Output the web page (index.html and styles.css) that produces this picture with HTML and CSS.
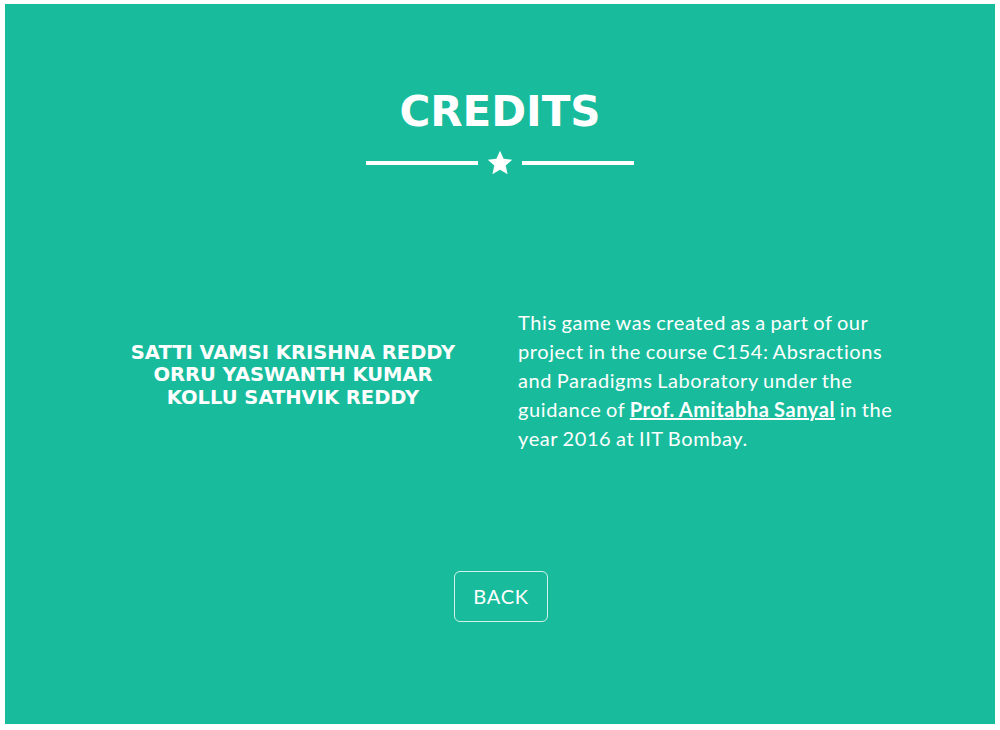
FILE: index.html
```html
<!DOCTYPE html>
<html>
<head>
<meta charset="utf-8">
<title>Credits</title>
<link rel="stylesheet" href="styles.css">
</head>
<body>
<div class="page">
  <section class="credits">
    <h2 class="title">CREDITS</h2>
    <div class="divider">
      <span class="line"></span>
      <svg class="star" viewBox="0 0 24 24" width="28" height="28"><path d="M12 1.5l3.1 6.9 7.4.8-5.6 5 1.6 7.4L12 17.8l-6.5 3.8 1.6-7.4-5.6-5 7.4-.8z" fill="#fff"/></svg>
      <span class="line"></span>
    </div>
    <div class="row">
      <div class="names">
        <div>SATTI VAMSI KRISHNA REDDY</div>
        <div>ORRU YASWANTH KUMAR</div>
        <div>KOLLU SATHVIK REDDY</div>
      </div>
      <p class="about">This game was created as a part of our project in the course C154: Absractions and Paradigms Laboratory under the guidance of <a href="#" class="prof">Prof. Amitabha Sanyal</a> in the year 2016 at IIT Bombay.</p>
    </div>
    <div class="actions">
      <a href="#" class="btn-back">BACK</a>
    </div>
  </section>
</div>
</body>
</html>
```

FILE: styles.css
```css
html, body {
  margin: 0;
  padding: 0;
  background: #ffffff;
}
.page {
  padding: 4px 5px 6px 5px;
}
.credits {
  height: 720px;
  box-sizing: border-box;
  background: #18bc9c;
  color: #ffffff;
  padding-top: 84px;
  text-align: center;
  font-family: Lato, "Open Sans", sans-serif;
}
.title {
  margin: 0;
  font-family: "DejaVu Sans", sans-serif;
  font-weight: bold;
  font-size: 42px;
  line-height: 48px;
  letter-spacing: 0;
}
.divider {
  display: flex;
  justify-content: center;
  align-items: center;
  gap: 8px;
  margin-top: 13px;
  height: 28px;
}
.line {
  display: block;
  width: 112px;
  height: 4px;
  background: #ffffff;
}
.star {
  display: block;
}
.row {
  display: grid;
  grid-template-columns: 386px 382px;
  column-gap: 32px;
  justify-content: center;
  align-items: center;
  margin-top: 131px;
}
.names {
  font-family: "DejaVu Sans", sans-serif;
  font-weight: bold;
  font-size: 19.5px;
  line-height: 22.5px;
  text-align: center;
  padding-bottom: 10px;
}
.about {
  margin: 0;
  text-align: left;
  font-size: 20px;
  letter-spacing: 0.6px;
  word-spacing: -1px;
  line-height: 29px;
}
.prof {
  color: #ffffff;
  font-weight: bold;
  text-decoration: underline;
}
.actions {
  margin-top: 118px;
  display: flex;
  justify-content: center;
}
.btn-back {
  display: block;
  box-sizing: border-box;
  width: 94px;
  height: 51px;
  line-height: 49px;
  border: 1.5px solid rgba(255,255,255,0.8);
  border-radius: 6px;
  color: #ffffff;
  text-decoration: none;
  font-size: 20px;
  letter-spacing: 0.8px;
  margin-left: 2px;
}
```
